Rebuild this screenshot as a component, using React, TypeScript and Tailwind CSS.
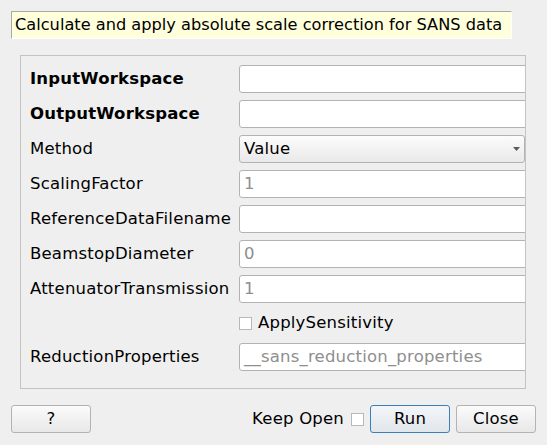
const rows: { label: string; bold?: boolean; kind: "text" | "combo" | "check"; value?: string }[] = [
  { label: "InputWorkspace", bold: true, kind: "text" },
  { label: "OutputWorkspace", bold: true, kind: "text" },
  { label: "Method", kind: "combo", value: "Value" },
  { label: "ScalingFactor", kind: "text", value: "1" },
  { label: "ReferenceDataFilename", kind: "text" },
  { label: "BeamstopDiameter", kind: "text", value: "0" },
  { label: "AttenuatorTransmission", kind: "text", value: "1" },
  { label: "ApplySensitivity", kind: "check" },
  { label: "ReductionProperties", kind: "text", value: "__sans_reduction_properties" },
];

function Field({ row }: { row: (typeof rows)[number] }) {
  if (row.kind === "check") {
    return (
      <div className="col-span-2 h-[26px] flex items-center pl-[209px]">
        <span className="w-[13px] h-[13px] border border-[#b9b9b9] bg-white" />
        <span className="ml-[6px]">{row.label}</span>
      </div>
    );
  }
  return (
    <>
      <div className={`h-[28px] flex items-center whitespace-nowrap ${row.bold ? "font-bold" : ""}`}>{row.label}</div>
      {row.kind === "combo" ? (
        <div className="h-[28px] w-[286px] flex items-center justify-between rounded-[3px] border border-[#b3b3b3] bg-gradient-to-b from-[#fcfcfc] to-[#e9e9e9] pl-[4px] pr-[4px]">
          <span>{row.value}</span>
          <svg width="7" height="4" viewBox="0 0 7 4">
            <path d="M0 0 H7 L3.5 4 Z" fill="#5a5a5a" />
          </svg>
        </div>
      ) : (
        <div className="h-[28px] w-[300px] flex items-center rounded-[3px] border border-[#b3b3b3] bg-white pl-[4px] text-[#8e8e8e]">
          {row.value}
        </div>
      )}
    </>
  );
}

export default function App() {
  return (
    <div
      className="w-[547px] h-[445px] bg-[#efefef] text-black text-[16.5px] tracking-[0.2px] overflow-hidden pt-[11px]"
      style={{ fontFamily: "'DejaVu Sans', sans-serif" }}
    >
      <div className="ml-[11px] w-[501px] h-[28px] flex items-center whitespace-nowrap overflow-hidden text-[16.2px] tracking-normal bg-[#ffffdc] border-t border-l border-t-[#a9a9a9] border-l-[#a9a9a9] border-r border-b border-r-white border-b-white pl-[3px]">
        Calculate and apply absolute scale correction for SANS data
      </div>

      <div className="ml-[20px] mt-[16px] w-[506px] h-[334px] border border-[#c3c3c3] overflow-hidden pt-[9px] pl-[9px]">
        <div className="grid grid-cols-[209px_1fr] gap-y-[7px]">
          {rows.map((r) => (
            <Field key={r.label} row={r} />
          ))}
        </div>
      </div>

      <div className="mt-[16px] flex items-center px-[11px]">
        <button className="w-[80px] h-[28px] rounded-[3px] border border-[#b3b3b3] bg-gradient-to-b from-[#fbfbfb] to-[#e8e8e8]">
          ?
        </button>
        <span className="ml-auto">Keep Open</span>
        <span className="ml-[7px] w-[13px] h-[13px] border border-[#b9b9b9] bg-white" />
        <button className="ml-[6px] w-[80px] h-[28px] rounded-[3px] border border-[#3d7fb8] bg-gradient-to-b from-[#f3f6f9] to-[#e1e6eb]">
          Run
        </button>
        <button className="ml-[6px] w-[80px] h-[28px] rounded-[3px] border border-[#b3b3b3] bg-gradient-to-b from-[#fbfbfb] to-[#e8e8e8]">
          Close
        </button>
      </div>
    </div>
  );
}
